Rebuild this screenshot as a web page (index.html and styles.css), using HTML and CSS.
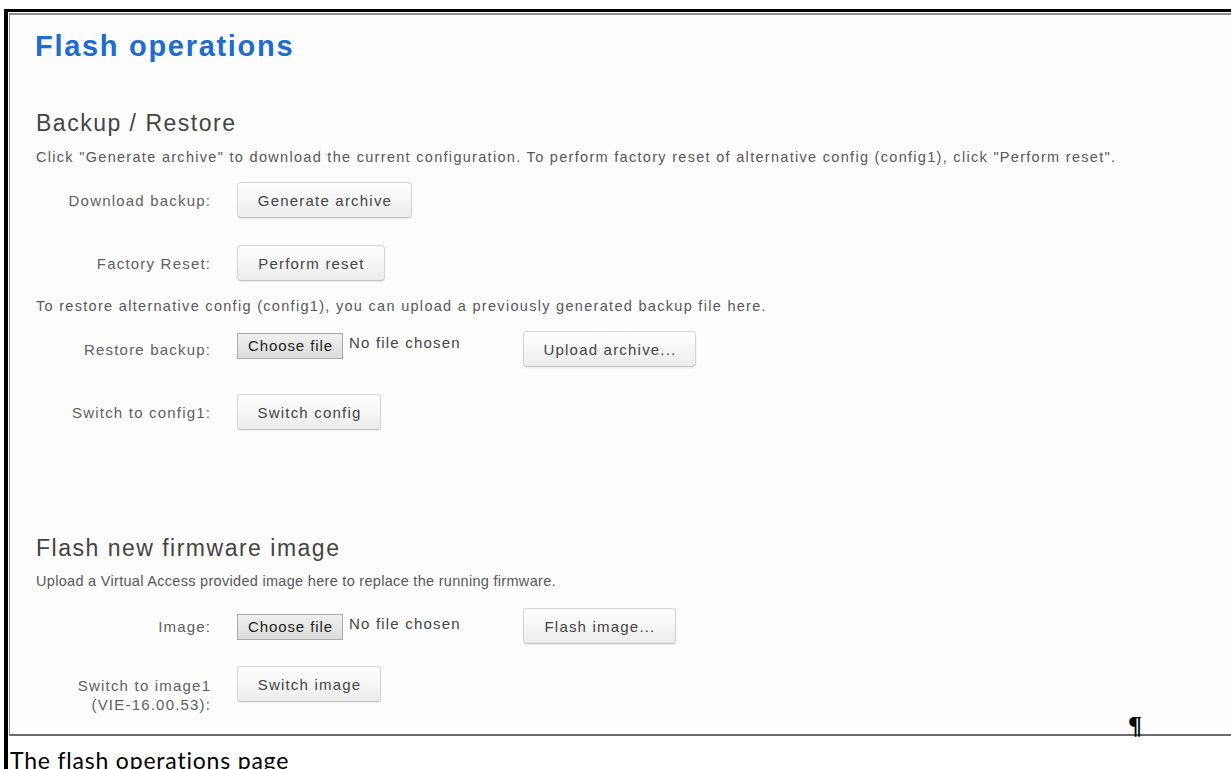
FILE: index.html
```html
<!DOCTYPE html>
<html lang="en">
<head>
<meta charset="utf-8">
<title>Flash operations</title>
<link rel="stylesheet" href="styles.css">
</head>
<body>
<div class="frame">
  <div class="shot">
    <h1 class="title">Flash operations</h1>

    <section class="sec">
      <h2 class="sec-title">Backup / Restore</h2>
      <p class="desc">Click "Generate archive" to download the current configuration. To perform factory reset of alternative config (config1), click "Perform reset".</p>
      <div class="row">
        <span class="label">Download backup:</span>
        <div class="ctl"><button class="btn btn-gen">Generate archive</button></div>
      </div>
      <div class="row">
        <span class="label">Factory Reset:</span>
        <div class="ctl"><button class="btn btn-reset">Perform reset</button></div>
      </div>

      <p class="desc desc-restore">To restore alternative config (config1), you can upload a previously generated backup file here.</p>
      <div class="row">
        <span class="label">Restore backup:</span>
        <div class="ctl">
          <span class="file"><span class="file-btn">Choose file</span><span class="file-name">No file chosen</span></span>
          <button class="btn btn-upload">Upload archive...</button>
        </div>
      </div>
      <div class="row">
        <span class="label">Switch to config1:</span>
        <div class="ctl"><button class="btn btn-switch">Switch config</button></div>
      </div>
    </section>

    <section class="sec sec-flash">
      <h2 class="sec-title">Flash new firmware image</h2>
      <p class="desc desc-flash">Upload a Virtual Access provided image here to replace the running firmware.</p>
      <div class="row row-image">
        <span class="label">Image:</span>
        <div class="ctl">
          <span class="file"><span class="file-btn">Choose file</span><span class="file-name">No file chosen</span></span>
          <button class="btn btn-flash">Flash image...</button>
        </div>
      </div>
      <div class="row row-img">
        <span class="label">Switch to image1<br>(VIE-16.00.53):</span>
        <div class="ctl"><button class="btn btn-switch">Switch image</button></div>
      </div>
    </section>
  </div>
  <p class="caption">The flash operations page</p>
</div>
<span class="pilcrow">¶</span>
</body>
</html>
```

FILE: styles.css
```css
html, body {
  margin: 0;
  padding: 0;
  background: #ffffff;
}

body {
  width: 1231px;
  height: 769px;
  overflow: hidden;
  position: relative;
  font-family: "Liberation Sans", Arial, sans-serif;
}

/* document frame: heavy rule on top and left */
.frame {
  margin: 9px 0 0 4px;
  border-top: 3px solid #000;
  border-left: 4px solid #000;
}

.shot {
  box-sizing: border-box;
  height: 723px;
  margin: 1px 0 0 1px;
  padding: 0 0 0 25px;
  border-top: 2px solid #8c8c8c;
  border-left: 1px solid #8c8c8c;
  border-bottom: 2px solid #6c6c6c;
  background: #fdfdfd;
  color: #555;
  overflow: hidden;
}

.title {
  margin: 0;
  padding-top: 14px;
  font-size: 29px;
  line-height: 34px;
  font-weight: bold;
  color: #1f6ccf;
  letter-spacing: 1.7px;
}

.sec {
  margin-top: 46px;
}

.sec-title {
  margin: 0 0 0 1px;
  font-size: 23px;
  line-height: 28px;
  font-weight: normal;
  color: #444;
  letter-spacing: 1.5px;
}

.desc {
  margin: 11px 0 0 1px;
  font-size: 14.5px;
  line-height: 18px;
  color: #585858;
  letter-spacing: 1.3px;
  white-space: nowrap;
}

.row {
  display: grid;
  grid-template-columns: 175px auto;
  column-gap: 27px;
  align-items: center;
  margin-top: 27px;
  height: 36px;
}

.desc + .row {
  margin-top: 16px;
}

.label {
  text-align: right;
  margin-right: -1.2px;
  font-size: 15px;
  line-height: 19px;
  color: #606060;
  letter-spacing: 1.2px;
}

.ctl {
  display: flex;
  align-items: center;
}

.btn {
  box-sizing: border-box;
  height: 36px;
  padding: 0 0 0 1px;
  border: 1px solid #d6d6d6;
  border-bottom-color: #c4c4c4;
  border-radius: 4px;
  background: linear-gradient(#ffffff, #ececec);
  box-shadow: 0 1px 2px rgba(0, 0, 0, 0.08);
  font-family: "Liberation Sans", Arial, sans-serif;
  font-size: 15px;
  color: #444;
  letter-spacing: 1.2px;
}

.btn-gen { width: 175px; }
.btn-reset { width: 148px; }
.btn-upload { width: 173px; }
.btn-switch { width: 144px; }
.btn-flash { width: 153px; }

.desc-restore {
  margin-top: 16px;
}

/* native-looking file picker */
.file {
  display: flex;
  align-items: flex-start;
  width: 286px;
  height: 32px;
}

.file-btn {
  box-sizing: border-box;
  height: 26px;
  padding: 0 9px 0 10px;
  border: 1px solid #a9a9a9;
  background: linear-gradient(#f0f0f0, #dcdcdc);
  font-size: 15px;
  line-height: 24px;
  color: #222;
  letter-spacing: 0.9px;
}

.file-name {
  margin-left: 6px;
  font-size: 15px;
  line-height: 20px;
  color: #444;
  letter-spacing: 1.2px;
}

.sec-flash {
  margin-top: 104px;
}

.desc-flash {
  margin-top: 10px;
  letter-spacing: 0.3px;
}

.row-image .file {
  margin-top: 8px;
}

.row-img {
  align-items: start;
  margin-top: 24px;
}

.row-img .label {
  padding-top: 10px;
}

/* figure caption below the frame */
.caption {
  margin: 0;
  padding: 11px 0 0 2px;
  font-family: Lato, "Open Sans", sans-serif;
  font-size: 23px;
  line-height: 26px;
  color: #000;
  letter-spacing: 0.8px;
}

.pilcrow {
  position: absolute;
  left: 1128px;
  top: 713px;
  font-family: "Liberation Serif", serif;
  font-weight: bold;
  font-size: 26px;
  line-height: 26px;
  color: #000;
}
```
